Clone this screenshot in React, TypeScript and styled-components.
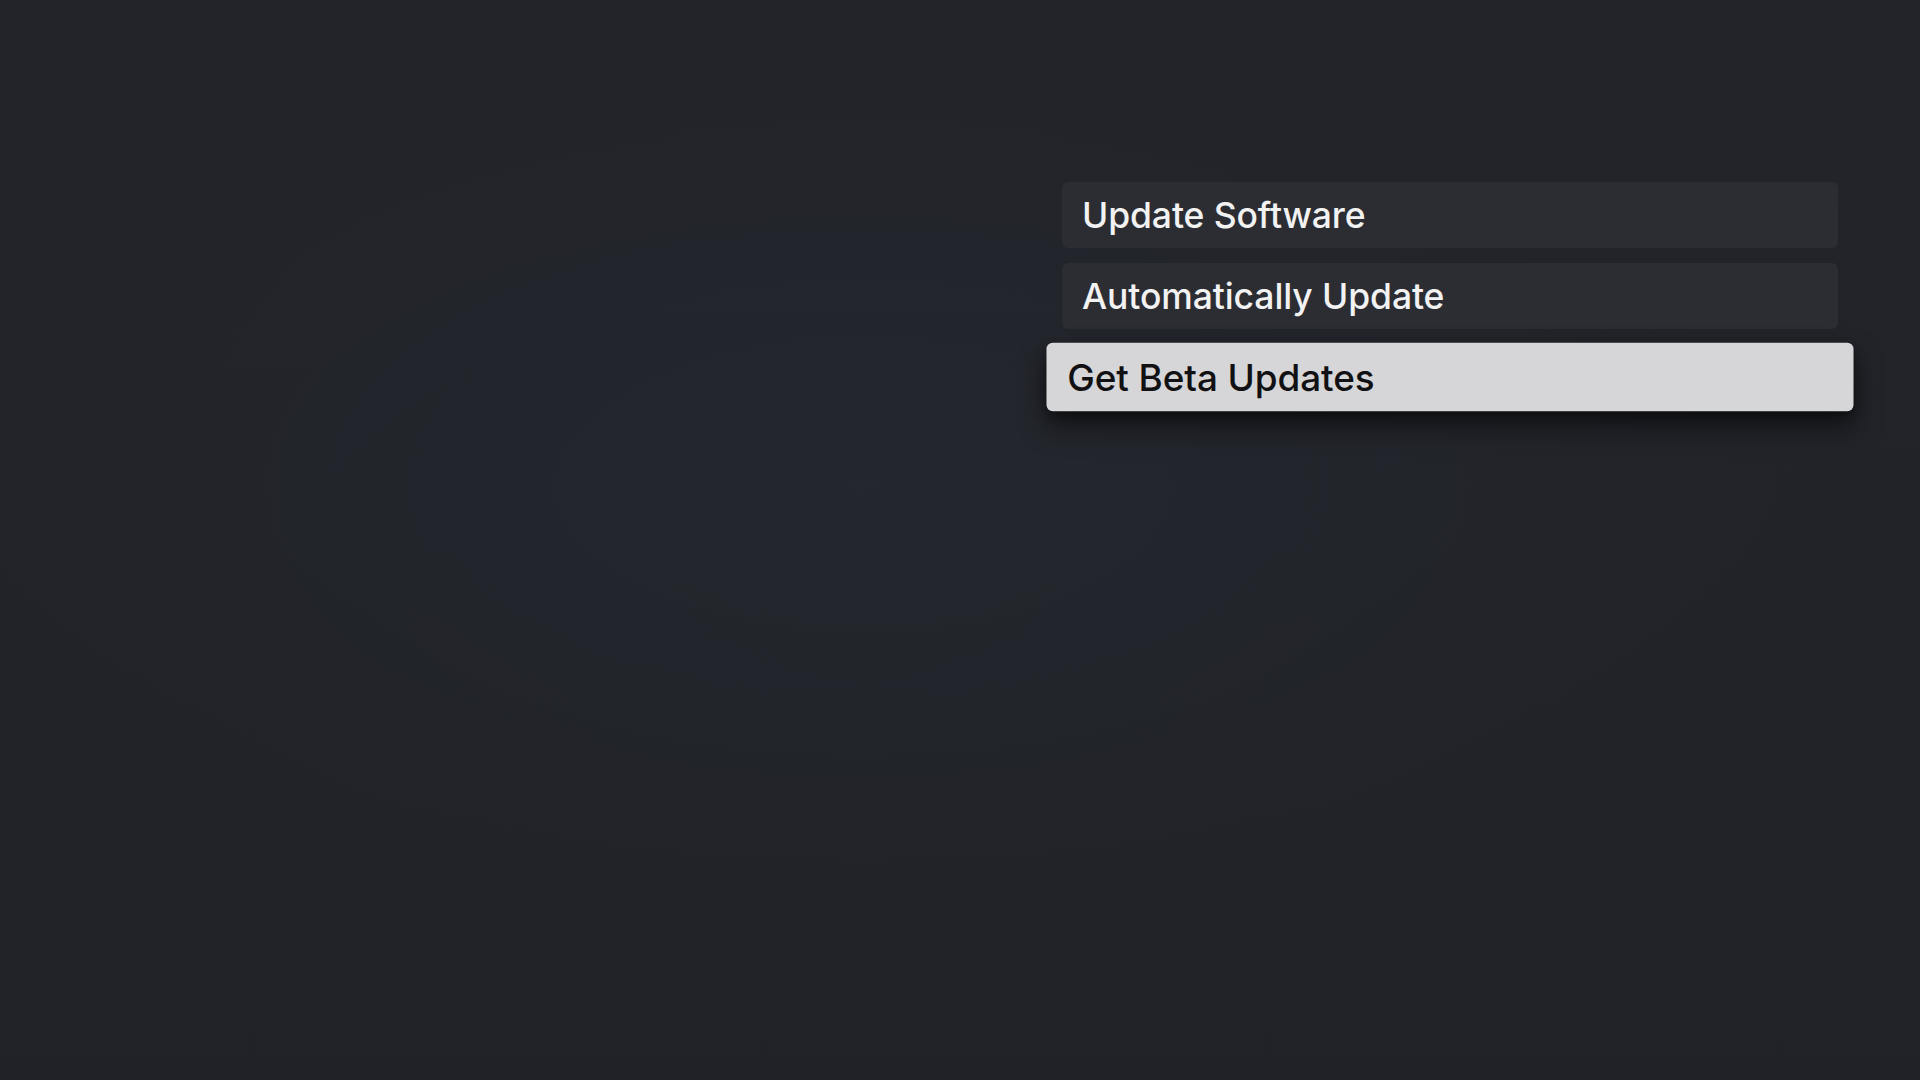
import React from "react";
import styled, { createGlobalStyle } from "styled-components";

const Global = createGlobalStyle`
  html, body { margin: 0; padding: 0; width: 1920px; height: 1080px; overflow: hidden; }
  body { background: #212329; font-family: Inter, "Noto Sans", sans-serif; }
`;

const Screen = styled.div`
  width: 1920px;
  height: 1080px;
  box-sizing: border-box;
  background:
    radial-gradient(ellipse 70% 60% at 45% 45%, rgba(36, 39, 46, 0.9), rgba(32, 34, 39, 0) 70%),
    linear-gradient(180deg, #22242a 0%, #212329 50%, #202227 100%);
  display: flex;
  justify-content: flex-end;
  padding: 182px 82px 0 0;
`;

const Menu = styled.div`
  width: 776px;
  display: flex;
  flex-direction: column;
  gap: 15px;
`;

const Row = styled.div<{ $focused?: boolean }>`
  height: 66px;
  box-sizing: border-box;
  border-radius: 6px;
  display: flex;
  align-items: center;
  padding-left: 20px;
  font-size: 35.5px;
  font-weight: 500;
  letter-spacing: -0.1px;
  background: ${(p) => (p.$focused ? "#d6d6d8" : "#2b2d32")};
  color: ${(p) => (p.$focused ? "#111113" : "#f2f2f2")};
  transform: ${(p) => (p.$focused ? "scale(1.04)" : "none")};
  box-shadow: ${(p) =>
    p.$focused ? "0 14px 26px rgba(0,0,0,0.5), 0 4px 8px rgba(0,0,0,0.3)" : "none"};
`;

const items = [
  { label: "Update Software" },
  { label: "Automatically Update" },
  { label: "Get Beta Updates", focused: true },
];

export default function App() {
  return (
    <>
      <Global />
      <Screen>
        <Menu>
          {items.map((it) => (
            <Row key={it.label} $focused={it.focused}>
              {it.label}
            </Row>
          ))}
        </Menu>
      </Screen>
    </>
  );
}
